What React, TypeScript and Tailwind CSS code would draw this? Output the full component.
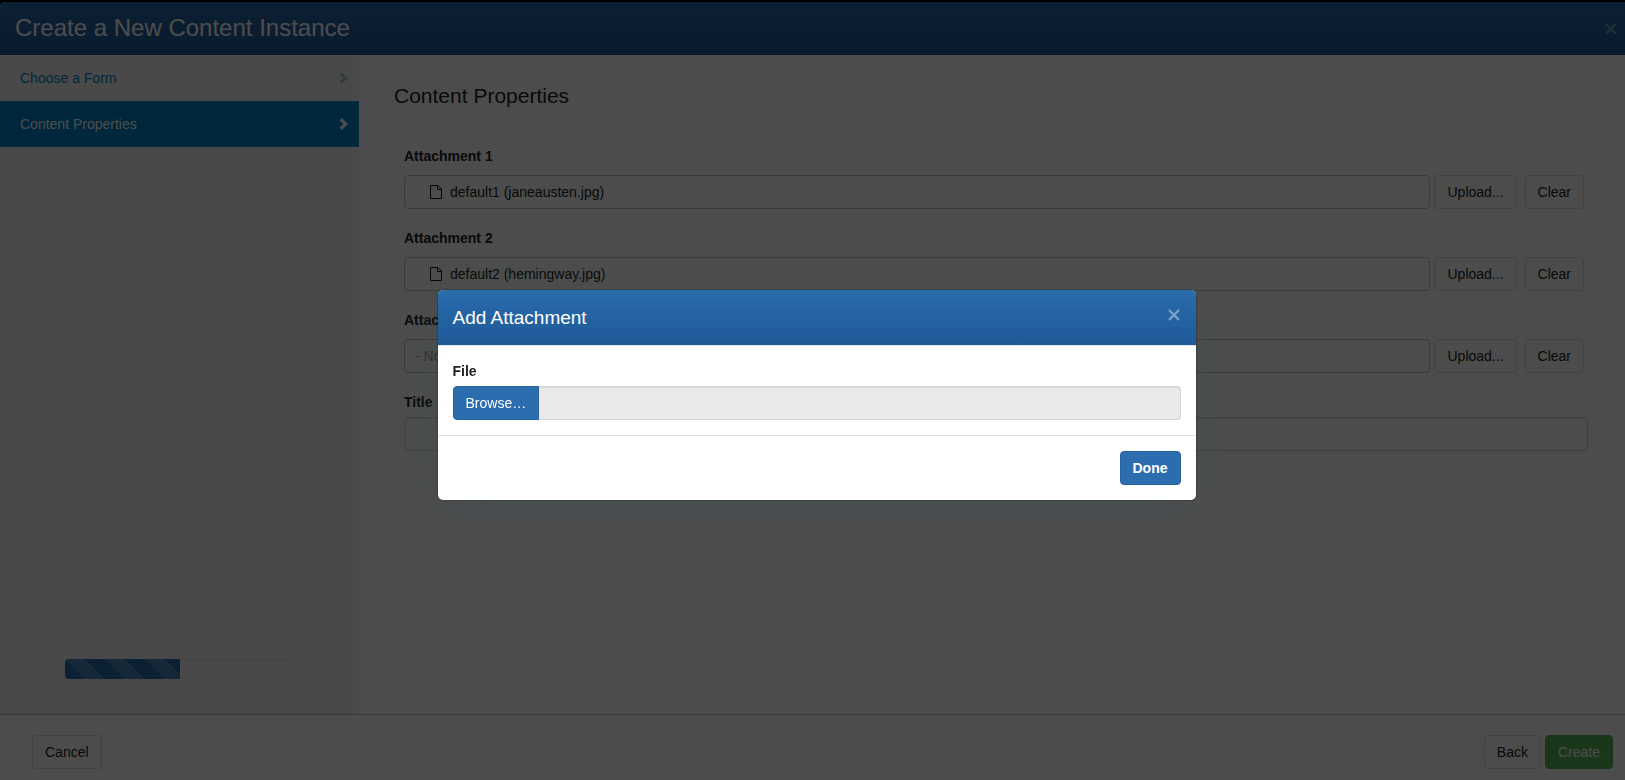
// App.tsx
import React, { useState } from 'react';

interface Attachment {
  label: string;
  value: string | null;
}

const attachments: Attachment[] = [
  { label: 'Attachment 1', value: 'default1 (janeausten.jpg)' },
  { label: 'Attachment 2', value: 'default2 (hemingway.jpg)' },
  { label: 'Attachment 3', value: null },
];

const steps = ['Choose a Form', 'Content Properties'];

const btn = 'h-[34px] shrink-0 rounded-sm border px-3 text-sm';
const btnDefault = `${btn} border-[#ddd] bg-white text-[#222]`;

const FileIcon = () => (
  <svg width="12" height="14" viewBox="0 0 12 14" fill="none" stroke="#111" strokeWidth="1" className="shrink-0">
    <path d="M.5.5h7.5l3.5 3.5v9.5H.5z" />
    <path d="M7.5.5v4h4" />
  </svg>
);

const ChevronIcon = () => (
  <svg width="10" height="12" viewBox="0 0 10 12" fill="none" stroke="currentColor" strokeWidth="3.4">
    <path d="M1.6 1.2 6.6 6l-5 4.8" />
  </svg>
);

const CloseIcon = () => (
  <svg width="12" height="12" viewBox="0 0 12 12" fill="none" stroke="currentColor" strokeWidth="2.4">
    <path d="m1 1 10 10M11 1 1 11" />
  </svg>
);

const AttachmentRow: React.FC<Attachment> = ({ label, value }) => (
  <div className="mb-[19px]">
    <div className="mb-[9px] text-sm leading-5 font-bold">{label}</div>
    <div className="flex">
      <div
        className={`flex h-[34px] flex-1 items-center gap-2 rounded-sm border border-[#c4c4c4] text-sm ${
          value ? 'pl-[25px]' : 'pl-[10px] text-[#999]'
        }`}
      >
        {value && <FileIcon />}
        {value ?? '- None -'}
      </div>
      <button className={`${btnDefault} ml-1`}>Upload...</button>
      <button className={`${btnDefault} ml-2`}>Clear</button>
    </div>
  </div>
);

const AddAttachment = ({ onClose }: { onClose: () => void }) => (
  <div className="fixed inset-0 bg-black/70 pt-[290px] pl-2">
    <div
      role="dialog"
      aria-labelledby="add-title"
      className="mx-auto w-[758px] overflow-hidden rounded-[5px] bg-white shadow-[0_0_1px_1px_rgba(0,0,0,0.2),0_10px_40px_rgba(60,80,90,0.35)]"
    >
      <div className="flex h-14 items-start justify-between border-b border-[#e5e5e5] bg-linear-to-b from-[#2a6cac] to-[#1f5998] pt-[14px] pr-4 pl-[15px] text-white">
        <h4 id="add-title" className="text-[19px] leading-7">
          Add Attachment
        </h4>
        <button aria-label="Close" onClick={onClose} className="mt-[5px] text-white/40">
          <CloseIcon />
        </button>
      </div>
      <div className="p-[15px]">
        <label htmlFor="file-name" className="mb-[5px] block text-sm leading-5 font-bold">
          File
        </label>
        <div className="flex">
          <button className="h-[34px] rounded-l-sm border border-[#2564a0] bg-[#2b6dae] px-3 text-sm text-white">
            Browse…
          </button>
          <input
            id="file-name"
            readOnly
            className="h-[34px] min-w-0 flex-1 rounded-r-sm border border-l-0 border-[#d4d4d4] bg-[#eaeaea] px-3 text-sm shadow-[inset_0_1px_1px_rgba(0,0,0,0.075)]"
          />
        </div>
      </div>
      <div className="flex justify-end border-t border-[#e0e0e0] p-[15px]">
        <button onClick={onClose} className={`${btn} border-[#2564a0] bg-[#2b6dae] font-bold text-white`}>
          Done
        </button>
      </div>
    </div>
  </div>
);

export default function App() {
  const [open, setOpen] = useState(true);

  return (
    <div className="bg-black pt-0.5 font-['Liberation_Sans',Arial,sans-serif] text-[#222]">
      <div className="flex h-[calc(100vh-2px)] flex-col overflow-hidden rounded-tl-[5px] bg-white">
        <header className="flex h-[53px] shrink-0 items-center justify-between bg-linear-to-b from-[#2a6cac] to-[#1f5998] pr-2 pl-[15px] text-white">
          <h1 className="pb-0.5 text-2xl">Create a New Content Instance</h1>
          <button aria-label="Close wizard" className="text-white/35">
            <CloseIcon />
          </button>
        </header>

        <div className="flex min-h-0 flex-1">
          {/* Wizard steps */}
          <aside className="flex w-[359px] shrink-0 flex-col bg-[#f3f3f3]">
            <nav>
              {steps.map((step, idx) => (
                <a
                  key={step}
                  href="#"
                  className={`flex h-[46px] items-center justify-between pr-[10px] pl-5 text-sm ${
                    idx === 1 ? 'bg-[#0082c8] text-white' : 'text-[#0082c8]'
                  }`}
                >
                  {step}
                  <span className={idx === 1 ? 'text-white' : 'text-[#b3cbd8]'}>
                    <ChevronIcon />
                  </span>
                </a>
              ))}
            </nav>
            <div className="mx-[65px] mt-auto mb-[35px] h-5 overflow-hidden rounded-sm bg-[#f5f5f5] shadow-[inset_0_1px_2px_rgba(0,0,0,0.1)]">
              <div className="h-full w-1/2 bg-[#2b6dae] bg-[linear-gradient(45deg,rgba(255,255,255,.15)_25%,transparent_25%,transparent_50%,rgba(255,255,255,.15)_50%,rgba(255,255,255,.15)_75%,transparent_75%,transparent)] bg-[length:40px_40px]" />
            </div>
          </aside>

          <main className="flex-1 pl-[35px]">
            <h2 className="pt-[27px] text-[21px] leading-7">Content Properties</h2>
            <div className="mt-9 mr-[37px] ml-[10px]">
              <div className="mr-1">
                {attachments.map((a) => (
                  <AttachmentRow key={a.label} {...a} />
                ))}
              </div>
              <label htmlFor="title" className="mb-[5px] block text-sm leading-5 font-bold">
                Title
              </label>
              <input
                id="title"
                className="h-[34px] w-full rounded-sm border border-[#d4d4d4] px-3 text-sm shadow-[inset_0_1px_1px_rgba(0,0,0,0.075)]"
              />
            </div>
          </main>
        </div>

        <footer className="flex h-[66px] shrink-0 gap-1 border-t border-[#c4c4c4] pt-5 pr-3 pl-8">
          <button className={`${btnDefault} mr-auto`}>Cancel</button>
          <button className={btnDefault}>Back</button>
          <button className={`${btn} border-[#53b257] bg-[#5cb85c] text-white`}>Create</button>
        </footer>
      </div>

      {open && <AddAttachment onClose={() => setOpen(false)} />}
    </div>
  );
}
